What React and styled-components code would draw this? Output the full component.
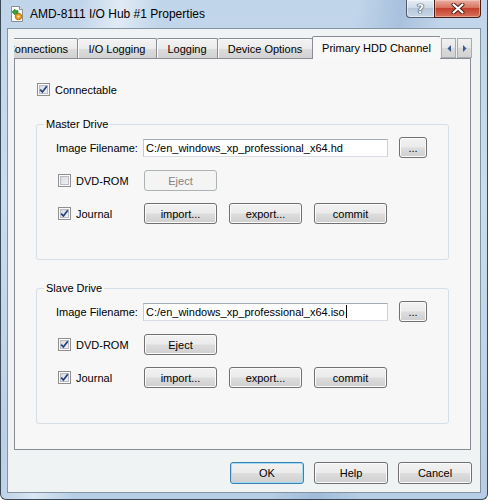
import React from 'react';
import styled, { createGlobalStyle } from 'styled-components';

const GlobalStyle = createGlobalStyle`
  html, body {
    margin: 0;
    padding: 0;
  }
  body {
    width: 488px;
    height: 500px;
    overflow: hidden;
    font-family: "Liberation Sans", Arial, sans-serif;
    font-size: 11px;
    color: #000;
  }
`

const Window = styled.div`
    box-sizing: border-box;
    width: 488px;
    height: 500px;
    display: flex;
    flex-direction: column;
    padding: 0 6px 6px;
    border: 1px solid #3b4856;
    border-top: none;
    border-radius: 0 0 6px 6px;
    background:
        linear-gradient(100deg, rgba(255,255,255,0) 14%, rgba(255,255,255,0.5) 21%, rgba(255,255,255,0) 28%, rgba(255,255,255,0) 62%, rgba(80,120,175,0.22) 70%, rgba(255,255,255,0) 78%),
        linear-gradient(#c1d5ea, #cadcef 40%, #b7cde5);
`

const TitleBar = styled.div`
    flex: none;
    height: 28px;
    display: flex;
    align-items: flex-start;
`

const TitleIcon = styled.svg`
    flex: none;
    margin: 6px 0 0 3px;
`

const TitleText = styled.span`
    margin-left: 6px;
    line-height: 28px;
    font-size: 12px;
    color: #000;
    white-space: nowrap;
`

const CaptionButtons = styled.div`
    margin-left: auto;
    display: flex;
`

const HelpButton = styled.div`
    box-sizing: border-box;
    width: 28px;
    height: 18px;
    border: 1px solid #4c5c6e;
    border-top: none;
    border-right: none;
    border-radius: 0 0 0 4px;
    background: linear-gradient(#e6edf5, #cfdbe8 45%, #b7c7da 50%, #c9d6e5);
    box-shadow: inset 0 0 0 1px rgba(255,255,255,0.5);
    display: flex;
    align-items: center;
    justify-content: center;
    font: bold 13px "DejaVu Sans", sans-serif;
    color: #f4f6f8;
    text-shadow: 0 0 1px #2b3848, 0 0 1px #2b3848, 0 0 1px #2b3848;
`

const CloseButton = styled.div`
    box-sizing: border-box;
    width: 47px;
    height: 18px;
    border: 1px solid #4a1e16;
    border-top: none;
    border-radius: 0 0 4px 0;
    background: linear-gradient(#eab0a3, #d7735f 45%, #c4412d 50%, #d8705a);
    box-shadow: inset 0 0 0 1px rgba(255,220,210,0.45);
    display: flex;
    align-items: center;
    justify-content: center;
`

const Client = styled.div`
    flex: 1;
    display: flex;
    flex-direction: column;
    padding: 7px 9px 8px 6px;
    border: 1px solid #8493a2;
    background: #eff3f3;
    min-height: 0;
`

const TabStrip = styled.div`
    flex: none;
    height: 23px;
    margin-bottom: -1px;
    display: flex;
    align-items: flex-end;
    position: relative;
    z-index: 1;
`

const TabViewport = styled.div`
    flex: 1;
    height: 23px;
    overflow: hidden;
    display: flex;
    align-items: flex-end;
`

const TabTrack = styled.div`
    display: flex;
    align-items: flex-end;
    margin-left: -16px;
`

const Tab = styled.div`
    box-sizing: border-box;
    flex: none;
    width: ${p => p.$width}px;
    height: ${p => (p.$active ? 23 : 20)}px;
    margin-bottom: ${p => (p.$active ? 0 : 1)}px;
    margin-left: ${p => (p.$active ? -1 : 0)}px;
    padding-top: ${p => (p.$active ? 0 : 1)}px;
    display: flex;
    align-items: center;
    justify-content: center;
    border: 1px solid #898c95;
    border-left-width: ${p => (p.$active ? 1 : 0)}px;
    border-bottom: none;
    border-radius: 2px 2px 0 0;
    background: ${p => (p.$active
        ? '#f8f8f8'
        : 'linear-gradient(#f3f3f3, #ebebeb 50%, #dcdcdc 50%, #d2d2d2)')};
    box-shadow: ${p => (p.$active ? 'none' : 'inset 1px 1px 0 #fafafa')};
    white-space: nowrap;
`

const ScrollArrows = styled.div`
    flex: none;
    display: flex;
    gap: 1px;
    margin: 0 -1px 1px 1px;
`

const ArrowButton = styled.div`
    box-sizing: border-box;
    width: 15px;
    height: 20px;
    border: 1px solid #a7abb2;
    background: linear-gradient(#f1f1f1, #e7e7e7 50%, #d9d9d9 50%, #d3d3d3);
    display: flex;
    align-items: center;
    justify-content: center;
`

const Panel = styled.div`
    flex: 1;
    min-height: 0;
    display: flex;
    flex-direction: column;
    padding: 24px 21px 0;
    border: 1px solid #898c95;
    background: #f7f7f7;
`

const CheckRow = styled.label`
    display: flex;
    align-items: center;
    gap: 5px;
    height: 13px;
    margin-left: ${p => p.$indent || 0}px;
    white-space: nowrap;
`

const Box = styled.span`
    box-sizing: border-box;
    flex: none;
    width: 13px;
    height: 13px;
    border: 1px solid #8f8f8f;
    background: linear-gradient(135deg, #d3d6da, #f6f6f6);
    box-shadow: inset 0 0 0 1px #fbfbfb, inset 0 0 0 2px #b9bdc3;
    display: flex;
    align-items: center;
    justify-content: center;
`

const Group = styled.div`
    position: relative;
    margin-top: 28px;
    padding: 6px 19px 29px;
    border: 1px solid #d5dfe5;
    border-radius: 3px;
`

const GroupTitle = styled.span`
    position: absolute;
    top: -7px;
    left: 7px;
    padding: 0 2px;
    line-height: 13px;
    background: #f7f7f7;
`

const Row = styled.div`
    display: flex;
    align-items: center;
    height: 33px;
`

const LabelCell = styled.div`
    flex: none;
    width: 87px;
    display: flex;
    align-items: center;
    white-space: nowrap;
`

const Field = styled.div`
    box-sizing: border-box;
    width: 245px;
    height: 18px;
    padding: 0 2px;
    display: flex;
    align-items: center;
    border: 1px solid;
    border-color: #a5acb5 #ccd0d7 #d8dde3 #c4c8cf;
    background: #fff;
    white-space: nowrap;
    overflow: hidden;
`

const Caret = styled.span`
    display: inline-block;
    width: 1px;
    height: 13px;
    margin-left: 1px;
    background: #000;
`

const Buttons = styled.div`
    display: flex;
    gap: 12px;
    margin-left: ${p => p.$offset || 0}px;
`

const Button = styled.div`
    box-sizing: border-box;
    flex: none;
    width: ${p => p.$width || 73}px;
    height: ${p => p.$height || 21}px;
    display: flex;
    align-items: center;
    justify-content: center;
    border: 1px solid ${p => (p.$disabled ? '#adb2b5' : p.$default ? '#3c7fb1' : '#707070')};
    border-radius: 3px;
    background: ${p => (p.$disabled
        ? '#f4f4f4'
        : 'linear-gradient(#f2f2f2, #ebebeb 48%, #dddddd 52%, #cfcfcf)')};
    box-shadow: inset 0 0 0 1px ${p => (p.$disabled ? '#f4f4f4' : p.$default ? '#9fdcf7' : '#fbfbfb')};
    color: ${p => (p.$disabled ? '#838383' : '#000')};
    white-space: nowrap;
`

const Footer = styled.div`
    flex: none;
    display: flex;
    justify-content: flex-end;
    gap: 10px;
    margin: 12px -1px 0 0;
`

const CheckMark = () => (
    <svg width="9" height="9" viewBox="0 0 9 9">
        <path d="M1.2 4.6 L3.4 7 L7.8 1.2" fill="none" stroke="#24407e" strokeWidth="1.7" />
    </svg>
)

const Checkbox = ({ checked, label, indent }) => (
    <CheckRow $indent={indent}>
        <Box>{checked && <CheckMark />}</Box>
        {label}
    </CheckRow>
)

const tabs = [
    { label: 'Connections', width: 80 },
    { label: 'I/O Logging', width: 79 },
    { label: 'Logging', width: 61 },
    { label: 'Device Options', width: 95 },
    { label: 'Primary HDD Channel', width: 129, active: true },
]

const Drive = ({ title, file, dvd, caret }) => (
    <Group>
        <GroupTitle>{title}</GroupTitle>
        <Row>
            <LabelCell>Image Filename:</LabelCell>
            <Field>
                {file}
                {caret && <Caret />}
            </Field>
            <Buttons $offset={11}>
                <Button $width={28} $height={21}>...</Button>
            </Buttons>
        </Row>
        <Row>
            <LabelCell>
                <Checkbox checked={dvd} label="DVD-ROM" indent={2} />
            </LabelCell>
            <Buttons $offset={1}>
                <Button $disabled={!dvd}>Eject</Button>
            </Buttons>
        </Row>
        <Row>
            <LabelCell>
                <Checkbox checked label="Journal" indent={2} />
            </LabelCell>
            <Buttons $offset={1}>
                <Button>import...</Button>
                <Button>export...</Button>
                <Button>commit</Button>
            </Buttons>
        </Row>
    </Group>
)

const App = () => {
    return (
        <>
            <GlobalStyle />
            <Window>
                <TitleBar>
                    <TitleIcon width="14" height="16" viewBox="0 0 14 16">
                        <path d="M1.5 0.5 H9.5 L12.5 3.5 V15.5 H1.5 Z" fill="#fdfdfd" stroke="#8a8f96" />
                        <path d="M9.5 0.5 V3.5 H12.5" fill="#e4e6e9" stroke="#8a8f96" />
                        <circle cx="8.5" cy="10.5" r="3.2" fill="#f0a21e" stroke="#b66a0a" />
                        <circle cx="8.5" cy="10.5" r="1.1" fill="#fde7b0" />
                        <path d="M2 6 L5 3 L5 4.6 L8 4.6 L8 7.4 L5 7.4 L5 9 Z" fill="#3aa53a" stroke="#1f6e1f" strokeWidth="0.6" />
                    </TitleIcon>
                    <TitleText>AMD-8111 I/O Hub #1 Properties</TitleText>
                    <CaptionButtons>
                        <HelpButton>?</HelpButton>
                        <CloseButton>
                            <svg width="14" height="11" viewBox="0 0 14 11">
                                <path d="M2.5 1.5 L11.5 9.5 M11.5 1.5 L2.5 9.5" stroke="#4a1a12" strokeWidth="4" strokeLinecap="round" />
                                <path d="M2.5 1.5 L11.5 9.5 M11.5 1.5 L2.5 9.5" stroke="#fff" strokeWidth="2.2" strokeLinecap="round" />
                            </svg>
                        </CloseButton>
                    </CaptionButtons>
                </TitleBar>
                <Client>
                    <TabStrip>
                        <TabViewport>
                            <TabTrack>
                                {tabs.map(t => (
                                    <Tab key={t.label} $width={t.width} $active={t.active}>{t.label}</Tab>
                                ))}
                            </TabTrack>
                        </TabViewport>
                        <ScrollArrows>
                            <ArrowButton>
                                <svg width="4" height="7" viewBox="0 0 4 7"><path d="M4 0 V7 L0.5 3.5 Z" fill="#3c5891" /></svg>
                            </ArrowButton>
                            <ArrowButton>
                                <svg width="4" height="7" viewBox="0 0 4 7"><path d="M0 0 V7 L3.5 3.5 Z" fill="#3c5891" /></svg>
                            </ArrowButton>
                        </ScrollArrows>
                    </TabStrip>
                    <Panel>
                        <Checkbox checked label="Connectable" indent={1} />
                        <Drive title="Master Drive" file="C:/en_windows_xp_professional_x64.hd" />
                        <Drive title="Slave Drive" file="C:/en_windows_xp_professional_x64.iso" dvd caret />
                    </Panel>
                    <Footer>
                        <Button $width={74} $height={22} $default>OK</Button>
                        <Button $width={74} $height={22}>Help</Button>
                        <Button $width={74} $height={22}>Cancel</Button>
                    </Footer>
                </Client>
            </Window>
        </>
    );
};

export default App;
